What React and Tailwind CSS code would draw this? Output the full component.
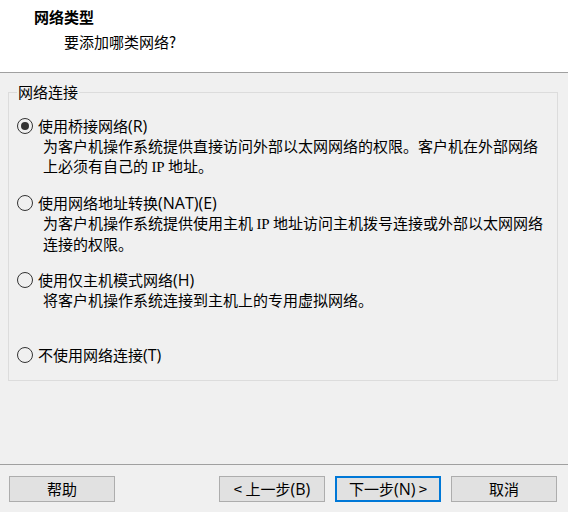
import React, { useState } from "react";

const options = [
    {
        id: "bridged",
        label: "使用桥接网络",
        key: "(R)",
        desc: [
            "为客户机操作系统提供直接访问外部以太网网络的权限。客户机在外部网络",
            <>上必须有自己的 <span className="font-['Liberation_Serif']">IP</span> 地址。</>,
        ],
    },
    {
        id: "nat",
        label: "使用网络地址转换",
        key: "(NAT)(E)",
        desc: [
            <>为客户机操作系统提供使用主机 <span className="font-['Liberation_Serif']">IP</span> 地址访问主机拨号连接或外部以太网网络</>,
            "连接的权限。",
        ],
    },
    {
        id: "hostonly",
        label: "使用仅主机模式网络",
        key: "(H)",
        desc: ["将客户机操作系统连接到主机上的专用虚拟网络。"],
    },
    { id: "none", label: "不使用网络连接", key: "(T)", desc: [] },
];

function Radio({ checked }) {
    return (
        <span className="w-[16px] h-[16px] rounded-full border border-[#333333] bg-[#f0f0f0] flex items-center justify-center shrink-0">
            {checked && <span className="w-[8px] h-[8px] rounded-full bg-[#333333]" />}
        </span>
    );
}

export default function App() {
    const [selected, setSelected] = useState("bridged");

    return (
        <div className="w-[568px] h-[512px] bg-[#f0f0f0] flex flex-col text-[15px] leading-[20px] text-black font-['Noto_Sans_CJK_SC',sans-serif]">
            {/* Header */}
            <div className="h-[73px] bg-white border-b border-[#a0a0a0] pl-[34px] pt-[7px] shrink-0">
                <div className="font-bold">网络类型</div>
                <div className="mt-[5px] pl-[30px]">要添加哪类网络?</div>
            </div>

            {/* Group box */}
            <fieldset className="mt-[9px] ml-[8px] w-[550px] border border-[#dcdcdc] pl-[8px] pr-[8px] pt-[14px] pb-[15px]">
                <legend className="px-[1px] leading-[20px]">网络连接</legend>
                {options.map((o, i) => (
                    <div
                        key={o.id}
                        className={i === 0 ? "" : i === 3 ? "mt-[35px]" : "mt-[16px]"}
                    >
                        <label
                            className="flex items-center gap-[5px] cursor-default"
                            onClick={() => setSelected(o.id)}
                        >
                            <Radio checked={selected === o.id} />
                            <span className="whitespace-nowrap">
                                {o.label}
                                <span className="font-['Open_Sans'] text-[16px]">{o.key}</span>
                            </span>
                        </label>
                        {o.desc.map((line, j) => (
                            <div key={j} className="pl-[26px] whitespace-nowrap">{line}</div>
                        ))}
                    </div>
                ))}
            </fieldset>

            {/* Footer */}
            <div className="mt-auto border-t border-[#a0a0a0] pt-[11px] pb-[10px] pl-[9px] pr-[11px] flex">
                <button className="w-[106px] h-[26px] border border-[#adadad] bg-[#e1e1e1]">帮助</button>
                <div className="flex-1" />
                <div className="flex gap-[10px]">
                    <button className="w-[106px] h-[26px] border border-[#adadad] bg-[#e1e1e1]">
                        &lt; 上一步<span className="font-['Open_Sans'] text-[16px]">(B)</span>
                    </button>
                    <button className="w-[106px] h-[26px] border-2 border-[#0078d7] bg-[#e1e1e1]">
                        下一步<span className="font-['Open_Sans'] text-[16px]">(N)</span> &gt;
                    </button>
                    <button className="w-[106px] h-[26px] border border-[#adadad] bg-[#e1e1e1]">取消</button>
                </div>
            </div>
        </div>
    );
}
